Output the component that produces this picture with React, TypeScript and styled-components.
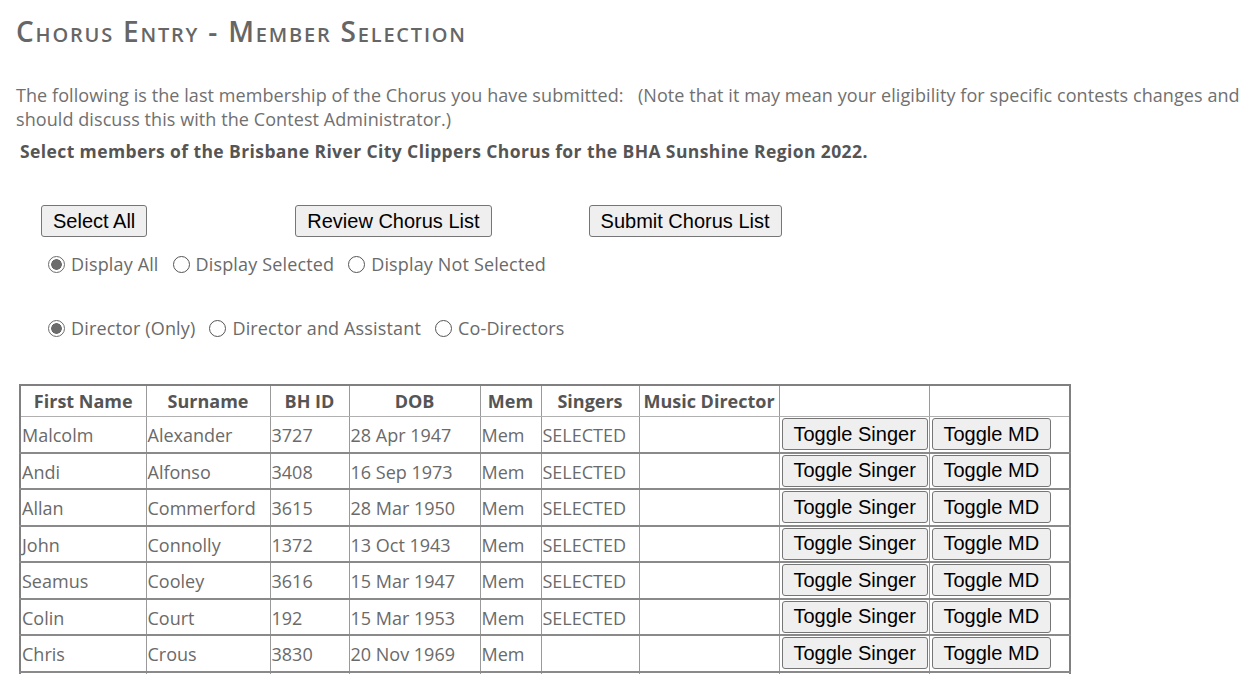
import React from 'react';
import styled, { createGlobalStyle } from 'styled-components';

const GlobalStyle = createGlobalStyle`
  html, body {
    margin: 0;
    padding: 0;
    background: #fff;
    overflow: hidden;
  }
  body {
    font-family: "Open Sans", "Noto Sans", sans-serif;
    color: #666;
  }
`;

const Page = styled.div`
  width: 1300px;
  padding: 12px 16px 0 16px;
`;

const Title = styled.h2`
  margin: 0;
  font-size: 28px;
  font-weight: 600;
  font-variant: small-caps;
  color: #666;
  letter-spacing: 1.8px;
`;

const Intro = styled.p`
  margin: 33px 0 0 0;
  font-size: 18px;
  line-height: 24px;
  color: #707070;
  white-space: nowrap;
  letter-spacing: 0.08px;
`;

const Lead = styled.div`
  margin: 8px 0 0 4px;
  font-size: 17.5px;
  font-weight: 700;
  color: #555;
  letter-spacing: 0.4px;
`;

const ButtonBar = styled.div`
  display: flex;
  margin: 42px 0 0 25px;
`;

const Button = styled.button<{ $gap?: number }>`
  font-family: "Liberation Sans", Arial, sans-serif;
  font-size: 20px;
  color: #000;
  background: #efefef;
  border: 1px solid #767676;
  border-radius: 3px;
  height: 32px;
  padding: 0 11px;
  margin-right: ${p => p.$gap ?? 0}px;
  cursor: pointer;
`;

const RadioRow = styled.div<{ $top: number }>`
  display: flex;
  align-items: center;
  margin: ${p => p.$top}px 0 0 32px;
  font-size: 18px;
  color: #6a6a6a;
  letter-spacing: 0.15px;
`;

const RadioLabel = styled.label`
  display: flex;
  align-items: center;
  margin-right: 14px;
`;

const Radio = styled.span<{ $on?: boolean }>`
  width: 17px;
  height: 17px;
  border: 1.5px solid ${p => (p.$on ? '#6c6c6c' : '#555')};
  border-radius: 50%;
  margin-right: 6px;
  box-sizing: border-box;
  background: ${p => (p.$on ? 'radial-gradient(circle, #6c6c6c 0 5px, #fff 5.6px)' : '#fff')};
  flex-shrink: 0;
`;

const Table = styled.table`
  margin: 44px 0 0 3px;
  border-collapse: collapse;
  table-layout: fixed;
  width: 1050px;
  border: 2px solid #808080;
`;

const Th = styled.th`
  height: 30px;
  padding: 0 2px;
  font-size: 18px;
  font-weight: 700;
  color: #555;
  text-align: center;
  border: 1px solid #9a9a9a;
  border-bottom: 1px solid #b0b0b0;
  white-space: nowrap;
  overflow: hidden;
`;

const Td = styled.td`
  height: 32.5px;
  padding: 2px 1px 0 1px;
  font-size: 18px;
  color: #6a6a6a;
  border: 1px solid #9a9a9a;
  border-bottom: 2px solid #8a8a8a;
  white-space: nowrap;
  vertical-align: middle;
  overflow: hidden;
`;

const BtnCell = styled(Td)`
  padding: 0 0 0 2px;
  height: 34.5px;
`;

const RowButton = styled(Button)`
  height: 32px;
  padding: 0 11px;
`;

type Member = {
  first: string;
  last: string;
  id: string;
  dob: string;
  selected: boolean;
};

const members: Member[] = [
  { first: 'Malcolm', last: 'Alexander', id: '3727', dob: '28 Apr 1947', selected: true },
  { first: 'Andi', last: 'Alfonso', id: '3408', dob: '16 Sep 1973', selected: true },
  { first: 'Allan', last: 'Commerford', id: '3615', dob: '28 Mar 1950', selected: true },
  { first: 'John', last: 'Connolly', id: '1372', dob: '13 Oct 1943', selected: true },
  { first: 'Seamus', last: 'Cooley', id: '3616', dob: '15 Mar 1947', selected: true },
  { first: 'Colin', last: 'Court', id: '192', dob: '15 Mar 1953', selected: true },
  { first: 'Chris', last: 'Crous', id: '3830', dob: '20 Nov 1969', selected: false },
  { first: '', last: '', id: '', dob: '', selected: false },
];

const columns: [string, number][] = [
  ['First Name', 126],
  ['Surname', 124],
  ['BH ID', 79],
  ['DOB', 131],
  ['Mem', 61],
  ['Singers', 98],
  ['Music Director', 140],
  ['', 150],
  ['', 141],
];

export default function App() {
  return (
    <>
      <GlobalStyle />
      <Page>
        <Title>Chorus Entry - Member Selection</Title>
        <Intro>
          The following is the last membership of the Chorus you have submitted:&nbsp;&nbsp; (Note that it may mean your eligibility for specific contests changes and you
          <br />
          should discuss this with the Contest Administrator.)
        </Intro>
        <Lead>Select members of the Brisbane River City Clippers Chorus for the BHA Sunshine Region 2022.</Lead>

        <ButtonBar>
          <Button $gap={148}>Select All</Button>
          <Button $gap={97}>Review Chorus List</Button>
          <Button>Submit Chorus List</Button>
        </ButtonBar>

        <RadioRow $top={15}>
          <RadioLabel><Radio $on />Display All</RadioLabel>
          <RadioLabel><Radio />Display Selected</RadioLabel>
          <RadioLabel><Radio />Display Not Selected</RadioLabel>
        </RadioRow>

        <RadioRow $top={40}>
          <RadioLabel><Radio $on />Director (Only)</RadioLabel>
          <RadioLabel><Radio />Director and Assistant</RadioLabel>
          <RadioLabel><Radio />Co-Directors</RadioLabel>
        </RadioRow>

        <Table>
          <colgroup>
            {columns.map(([, w], i) => (
              <col key={i} style={{ width: w }} />
            ))}
          </colgroup>
          <thead>
            <tr>
              {columns.map(([name], i) => (
                <Th key={i}>{name}</Th>
              ))}
            </tr>
          </thead>
          <tbody>
            {members.map((m, i) => (
              <tr key={i}>
                <Td>{m.first}</Td>
                <Td>{m.last}</Td>
                <Td>{m.id}</Td>
                <Td>{m.dob}</Td>
                <Td>{m.first ? 'Mem' : ''}</Td>
                <Td>{m.selected ? 'SELECTED' : ''}</Td>
                <Td />
                <BtnCell><RowButton>Toggle Singer</RowButton></BtnCell>
                <BtnCell><RowButton>Toggle MD</RowButton></BtnCell>
              </tr>
            ))}
          </tbody>
        </Table>
      </Page>
    </>
  );
}
